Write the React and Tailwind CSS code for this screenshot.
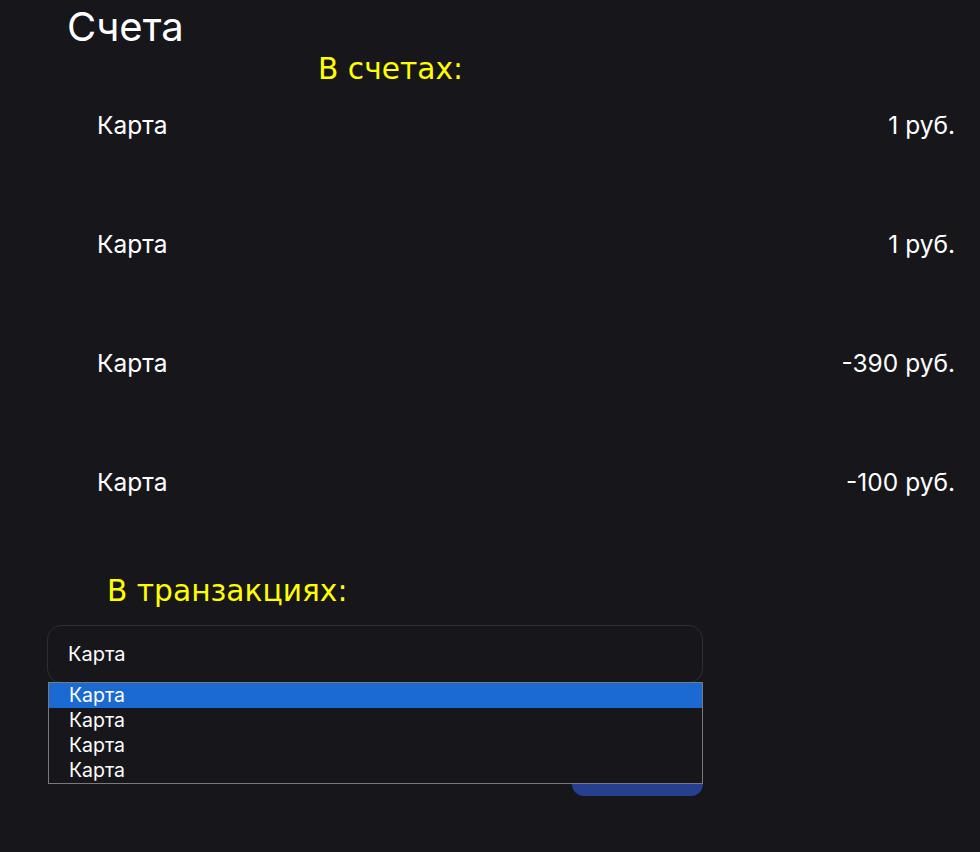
export default function App() {
    const accounts = [
        { name: 'Карта', amount: '1 руб.' },
        { name: 'Карта', amount: '1 руб.' },
        { name: 'Карта', amount: '-390 руб.' },
        { name: 'Карта', amount: '-100 руб.' },
    ];

    const options = ['Карта', 'Карта', 'Карта', 'Карта'];

    return (
        <div className="min-h-[852px] w-full bg-[#16161b] text-white font-['Inter',sans-serif]">
            <div className="pt-[6px]">
                <h1 className="ml-[67px] text-[40px] leading-[42px] font-normal">Счета</h1>

                <h2 className="ml-[318px] mt-[3px] text-[29.7px] leading-[36px] text-[#ffff00] font-['DejaVu_Sans',sans-serif]">
                    В счетах:
                </h2>

                {/* Accounts list */}
                <div className="mt-[22px] ml-[97px] mr-[25px] flex flex-col gap-[87px]">
                    {accounts.map((acc, i) => (
                        <div key={i} className="flex items-center justify-between text-[24.5px] leading-[32px]">
                            <span>{acc.name}</span>
                            <span>{acc.amount}</span>
                        </div>
                    ))}
                </div>

                <h2 className="ml-[107px] mt-[75px] text-[29.7px] leading-[36px] text-[#ffff00] font-['DejaVu_Sans',sans-serif]">
                    В транзакциях:
                </h2>

                {/* Transaction form */}
                <div className="ml-[47px] mt-[16px] w-[656px] flex flex-col">
                    <div className="relative">
                        <div className="h-[58px] rounded-[14px] border border-[#2d2d33] bg-[#16161b] flex items-center px-[20px] text-[20px]">
                            Карта
                        </div>
                        <div className="absolute left-[1px] right-0 top-[57px] z-10 border border-[#7a7a7a] bg-[#16161b]">
                            {options.map((opt, i) => (
                                <div
                                    key={i}
                                    className={`h-[25px] leading-[25px] pl-[20px] text-[19.5px] ${i === 0 ? 'bg-[#1b69d3]' : ''}`}
                                >
                                    {opt}
                                </div>
                            ))}
                        </div>
                    </div>
                    <div className="mt-[65px] flex justify-end">
                        <button className="h-[48px] w-[131px] rounded-[12px] bg-[#263f8f] text-white">
                            Добавить
                        </button>
                    </div>
                </div>
            </div>
        </div>
    );
}
